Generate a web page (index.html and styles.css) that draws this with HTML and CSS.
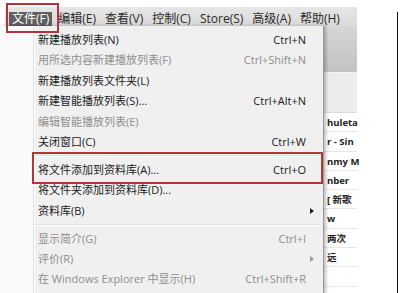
FILE: index.html
```html
<!DOCTYPE html>
<html lang="zh-CN">
<head>
  <meta charset="UTF-8" />
  <meta name="viewport" content="width=device-width, initial-scale=1.0" />
  <title>文件菜单</title>
  <link rel="stylesheet" href="styles.css">
</head>
<body>
  <div class="app">
    <div class="menubar">
      <span class="mi active">文件(F)</span>
      <span class="mi">编辑(E)</span>
      <span class="mi">查看(V)</span>
      <span class="mi">控制(C)</span>
      <span class="mi">Store(S)</span>
      <span class="mi">高级(A)</span>
      <span class="mi">帮助(H)</span>
    </div>
    <div class="toolbar"></div>
    <div class="header"></div>
    <ul class="list">
      <li>huleta</li>
      <li>r - Sin</li>
      <li>nmy M</li>
      <li>nber</li>
      <li>[ 新歌</li>
      <li>w</li>
      <li>两次</li>
      <li>远</li>
      <li></li>
    </ul>
  </div>
  <div class="edge"></div>

  <!-- dropdown of the File menu -->
  <div class="dropdown">
    <div class="row"><span>新建播放列表(N)</span><span class="key">Ctrl+N</span><span></span></div>
    <div class="row off"><span>用所选内容新建播放列表(F)</span><span class="key">Ctrl+Shift+N</span><span></span></div>
    <div class="row"><span>新建播放列表文件夹(L)</span><span class="key"></span><span></span></div>
    <div class="row"><span>新建智能播放列表(S)...</span><span class="key">Ctrl+Alt+N</span><span></span></div>
    <div class="row off"><span>编辑智能播放列表(E)</span><span class="key"></span><span></span></div>
    <div class="row"><span>关闭窗口(C)</span><span class="key">Ctrl+W</span><span></span></div>
    <div class="sep"></div>
    <div class="row"><span>将文件添加到资料库(A)...</span><span class="key">Ctrl+O</span><span></span></div>
    <div class="row"><span>将文件夹添加到资料库(D)...</span><span class="key"></span><span></span></div>
    <div class="row"><span>资料库(B)</span><span class="key"></span><span class="arrow"></span></div>
    <div class="sep"></div>
    <div class="row off"><span>显示简介(G)</span><span class="key">Ctrl+I</span><span></span></div>
    <div class="row off"><span>评价(R)</span><span class="key"></span><span class="arrow"></span></div>
    <div class="row off"><span>在 Windows Explorer 中显示(H)</span><span class="key">Ctrl+Shift+R</span><span></span></div>
  </div>

  <div class="mark mark-file"></div>
  <div class="mark mark-add"></div>
</body>
</html>
```

FILE: styles.css
```css
body {
  margin: 0;
  width: 404px;
  height: 293px;
  overflow: hidden;
  background: #fff;
  font-family: "Open Sans", "Noto Sans CJK SC", sans-serif;
  font-size: 11px;
  color: #222;
  display: flex;
  align-items: flex-start;
  position: relative;
}
.app {
  width: 352px;
  margin: 7px 0 0 5px;
}
.menubar {
  height: 19px;
  padding: 5px 0 0 4px;
  box-sizing: border-box;
  display: flex;
  gap: 3px;
  font-size: 12px;
  background: linear-gradient(#e6e6e6, #d9d9d9);
}
.mi {
  height: 14px;
  line-height: 14px;
  padding: 0 3px;
  color: #2a2a2a;
}
.mi.active {
  background: #5f5f5f;
  color: #fff;
}
.toolbar {
  height: 46px;
  background: linear-gradient(#d6d6d6, #c2c2c2);
  border-bottom: 1px solid #f4f4f4;
}
.header {
  height: 39px;
  background: #ececec;
  border-bottom: 1px solid #dcdcdc;
}
.list {
  list-style: none;
  margin: 0;
  padding: 0;
}
.list li {
  height: 19.3px;
  line-height: 19px;
  box-sizing: border-box;
  border-bottom: 1px solid #e6e6e6;
  padding-left: 322px;
  font-size: 9.5px;
  font-weight: bold;
  color: #222;
  white-space: nowrap;
}
.edge {
  width: 1px;
  height: 281px;
  margin: 12px 0 0 40px;
  background: #111;
}
.dropdown {
  position: absolute;
  left: 0;
  top: 26px;
  bottom: -10px;
  width: 324px;
  padding-top: 4px;
  box-sizing: border-box;
  border-right: 1px solid #9a9a9a;
  box-shadow: 2px 0 3px rgba(0, 0, 0, 0.25);
  background: linear-gradient(to right, #fafafa 0 33px, #e0e0e0 33px 34px, #fff 34px 35px, #f0f0f0 35px);
}
.row {
  height: 20.4px;
  line-height: 20px;
  display: grid;
  grid-template-columns: 1fr auto 12px;
  padding: 0 5px 0 38px;
  color: #1a1a1a;
  white-space: nowrap;
}
.row.off {
  color: #8e8e8e;
}
.key {
  text-align: right;
}
.arrow {
  justify-self: center;
  align-self: center;
  width: 0;
  height: 0;
  border-top: 3px solid transparent;
  border-bottom: 3px solid transparent;
  border-left: 4px solid #222;
}
.row.off .arrow {
  border-left-color: #999;
}
.sep {
  height: 7.6px;
  margin-left: 35px;
  margin-right: 3px;
  background: linear-gradient(transparent 3px, #dedede 3px 4px, #fff 4px 5px, transparent 5px);
}
.mark {
  position: absolute;
  border: 2px solid #b3343b;
  box-sizing: border-box;
}
.mark-file {
  left: 6px;
  top: 3px;
  width: 53px;
  height: 30px;
}
.mark-add {
  left: 32px;
  top: 152px;
  width: 291px;
  height: 32px;
}
```
